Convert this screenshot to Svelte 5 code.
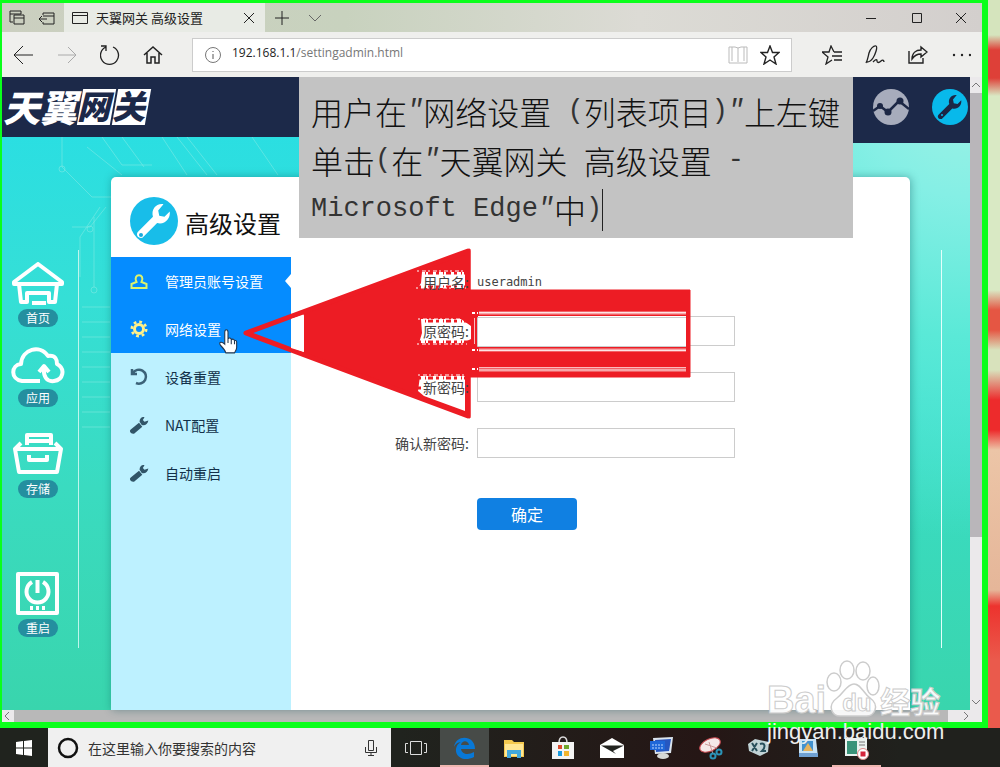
<script>
  const menu = [
    { label: '管理员账号设置', icon: 'user', on: true, notch: true },
    { label: '网络设置', icon: 'gear', on: true },
    { label: '设备重置', icon: 'reset' },
    { label: 'NAT配置', icon: 'tool' },
    { label: '自动重启', icon: 'tool' }
  ];
  const fields = [
    { id: 'old', label: '原密码:' },
    { id: 'new', label: '新密码:' },
    { id: 'confirm', label: '确认新密码:' }
  ];
  const apps = ['explorer', 'store', 'mail', 'monitor', 'snip', 'input', 'picture', 'recorder'];
</script>

{#snippet wrench()}
  <path d="M-15 10 -1 -4C-3 -11 2 -17 9 -16L4 -10 5 -5 10 -4 15 -9C16 -2 10 4 3 2L-11 16C-15 17 -18 13 -15 10Z" />
{/snippet}

<div class="desktop">
  <div class="upper">
    <div class="window">
      <div class="tabs">
        <button class="set" aria-label="标签页"><svg width="16" height="16" viewBox="0 0 16 16"><path d="M4 12H1V1h11v3M1 4h11M5 5h10v9H5zM5 8h10" /></svg></button>
        <button class="set" aria-label="搁置"><svg width="16" height="16" viewBox="0 0 16 16"><path d="M4 5V3h11v11H4v-2M4 6h11M0 9h8M3 6 0 9l3 3" /></svg></button>
        <div class="tab">
          <svg width="16" height="16" viewBox="0 0 16 16"><path d="M.5 2.500h15v11H.5zM.5 5.500h15" /></svg>
          <span>天翼网关 高级设置</span>
          <button aria-label="关闭标签页"><svg width="12" height="12" viewBox="0 0 12 12"><path d="m1 1 10 10M11 1 1 11" /></svg></button>
        </div>
        <button class="new" aria-label="新建"><svg width="14" height="14" viewBox="0 0 14 14"><path d="M7 0v14M0 7h14" /></svg></button>
        <button class="new" aria-label="更多标签"><svg width="14" height="14" viewBox="0 0 14 14"><path d="m1 4 6 6 6-6" stroke="#666" /></svg></button>
        <span class="fill"></span>
        <button class="win" aria-label="最小化"><svg width="12" height="12" viewBox="0 0 12 12"><path d="M1 6.500h10" /></svg></button>
        <button class="win" aria-label="最大化"><svg width="12" height="12" viewBox="0 0 12 12"><path d="M1.500 1.500h9v9h-9z" /></svg></button>
        <button class="win last" aria-label="关闭"><svg width="12" height="12" viewBox="0 0 12 12"><path d="m1 1 10 10M11 1 1 11" /></svg></button>
      </div>

      <div class="toolbar">
        <button aria-label="后退"><svg width="20" height="20" viewBox="0 0 20 20"><path d="M0 10h19M9 1 0 10l9 9" /></svg></button>
        <button aria-label="前进"><svg width="20" height="20" viewBox="0 0 20 20"><path d="M1 10h18M11 2l8 8-8 8" stroke="#aaa" /></svg></button>
        <button aria-label="刷新"><svg width="20" height="20" viewBox="0 0 20 20"><path d="M13 2a9 9 0 1 1-7 0M1 1h5v5" stroke-width="1.300" /></svg></button>
        <button aria-label="主页"><svg width="20" height="20" viewBox="0 0 20 20"><path d="M1 10 10 2l9 8M4 8v10h4v-6h4v6h4V8" stroke-width="1.500" /></svg></button>
        <div class="address">
          <svg width="16" height="16" viewBox="0 0 16 16"><circle cx="8" cy="8" r="7.500" stroke="#777" /><path d="M8 7v5M8 4v1" stroke="#555" /></svg>
          <span class="url">192.168.1.1<i>/settingadmin.html</i></span>
          <button aria-label="阅读视图"><svg width="20" height="20" viewBox="0 0 20 20"><path d="M10 3v14M1 2h6l3 1 3-1h6v16H1zM4 2v14M16 2v14" stroke="#bbb" /></svg></button>
          <button aria-label="收藏"><svg width="20" height="20" viewBox="0 0 20 20"><path d="m10 1 2.500 6.500H19l-5 4.500 2 7-6-4-6 4 2-7-5-4.500h6.500z" stroke-width="1.400" /></svg></button>
        </div>
        <div class="tools">
          <button aria-label="收藏夹"><svg width="20" height="20" viewBox="0 0 20 20"><path d="M12 7 9 1 7 7H0l6 5-2 7 6-4M12 7h8M10 11h10M12 15h8" stroke-width="1.300" /></svg></button>
          <button aria-label="笔记"><svg width="20" height="20" viewBox="0 0 20 20"><path d="M1 18c2-4 2-6 3-10s5-8 7-7-1 9-3 12-4 4-6 4M8 17c3-3 4-3 4-1s2 2 4 0 3 0 3 1" stroke-width="1.300" /></svg></button>
          <button aria-label="共享"><svg width="20" height="20" viewBox="0 0 20 20"><path d="M1 6v12h14v-5M13 2l6 5-6 5V9c-5 0-7 2-9 5 0-6 4-9 9-9z" stroke-width="1.400" /></svg></button>
          <button aria-label="设置及更多"><svg width="20" height="20" viewBox="0 0 20 20"><g fill="#222" stroke="none"><circle cx="3" cy="10" r="1.200" /><circle cx="11" cy="10" r="1.200" /><circle cx="19" cy="10" r="1.200" /></g></svg></button>
        </div>
      </div>

      <div class="view">
        <main class="page">
          <svg class="circuit" viewBox="0 0 968 633" preserveAspectRatio="xMinYMin slice">
            <path d="M60 60v30l30 30h20M100 60l20 28h30M120 60l22 30M160 60l25 38M185 60l30 38M175 60l30 38M250 60l26 38M85 70l35 28M70 150h18l16-20M78 200v-40l20-30M92 210v-70M80 230h28M80 245h28M80 260h28M80 275h28M80 290h28M80 305h28M80 320h28M80 335h28M80 350h28" />
            <circle cx="88" cy="152" r="3" /><circle cx="92" cy="213" r="3" /><circle cx="60" cy="92" r="3" />
          </svg>
          <header>
            <div class="brand">天翼<span class="box">网</span><span class="box">关</span></div>
            <div class="badges">
              <svg width="36" height="36" viewBox="-18 -18 36 36"><circle r="18" fill="#a7acbc" /><g fill="#1c2745"><path d="M-18 4-11-1-3 5 8-6 18 2" fill="none" stroke="#1c2745" stroke-width="2.500" /><circle cx="-11" cy="-1" r="3" /><circle cx="-3" cy="5" r="3.500" /><circle cx="9" cy="-6" r="3.500" /></g></svg>
              <svg width="36" height="36" viewBox="-18 -18 36 36"><circle r="18" fill="#08b9eb" /><g fill="#1c2745" transform="scale(.75)">{@render wrench()}</g><circle cx="-8" cy="8" r="1" fill="#08b9eb" /></svg>
            </div>
          </header>

          <div class="content">
            <nav class="rail">
              <a href="#home"><svg width="52" height="44" viewBox="0 0 52 44"><path d="M2 20 26 2l24 18v2H2zM7 22l2 18h6V31h22v9h6l2-18M20 41h14" /></svg><span>首页</span></a>
              <a href="#apps"><svg width="54" height="39" viewBox="0 0 54 39"><path d="M29 34H11C-1 32 0 18 10 17 11 2 29-3 37 9c8-1 9 4 9 8 9 5 6 16-3 17-7 1-11-4-10-14M28 25l5-6 5 6" /></svg><span>应用</span></a>
              <a href="#storage"><svg width="50" height="50" viewBox="0 0 50 50"><path d="M14 18V8h24v10M12 14h28M8 16l-6 6 4 23h38l4-23-6-6M3 22h44M16 28v5h18v-5" /></svg><span>存储</span></a>
              <a href="#restart" class="end"><svg width="44" height="44" viewBox="0 0 44 44"><path d="M2 2h39v39H2zM16 10a11 11 0 1 0 11 0M21.500 8v13" /><path d="M14 36h3m3 0h3m3 0h3" /></svg><span>重启</span></a>
            </nav>

            <section class="card">
              <div class="title">
                <svg width="50" height="50" viewBox="-25 -25 50 50"><circle r="24" fill="#18bde9" /><g fill="#fff" transform="scale(1.050)">{@render wrench()}</g><circle cx="-13" cy="14" r="2" fill="#18a9dc" /></svg>
                <h1>高级设置</h1>
              </div>
              <div class="panel">
                <ul class="menu">
                  {#each menu as item}
                    <li class:on={item.on} class:notch={item.notch}>
                      <a href="#menu">
                        <svg width="20" height="20" viewBox="-10 -10 20 20">
                          {#if item.icon === 'user'}
                            <path d="M-2.500 1C-7-8 7-8 2.500 1L7.500 3V7H-7.500V3Z" fill="none" stroke="#dcf36c" stroke-width="2" />
                          {:else if item.icon === 'gear'}
                            <circle r="4.500" fill="none" stroke="#fff18a" stroke-width="3" />
                            <circle r="7.200" fill="none" stroke="#fff18a" stroke-width="2.600" stroke-dasharray="2.800 2.855" />
                          {:else if item.icon === 'reset'}
                            <path d="M-6-4A7 7 0 1 1-3 6M-7-8v5h5" fill="none" stroke="#3c6278" stroke-width="2.500" />
                          {:else}
                            <g fill="#315568" transform="scale(.55)"><path d="M-15 8 0-4 6 3-9 16C-14 17-19 12-15 8ZM1-6C1-12 6-16 10-14L7-9 10-6 17-8C16-1 10 2 5 0Z" /></g>
                          {/if}
                        </svg>
                        {item.label}
                      </a>
                    </li>
                  {/each}
                </ul>
                <form>
                  <div class="row user"><span class="label">用户名:</span><span class="value">useradmin</span></div>
                  {#each fields as f}
                    <div class="row"><label class="label" for={f.id}>{f.label}</label><input id={f.id} type="password" /></div>
                  {/each}
                  <button type="button" class="ok">确定</button>
                </form>
              </div>

              <svg class="arrow" width="456" height="176" viewBox="240 245 456 176">
                <path d="M304 311 470 249V290H690V377H470V418L304 355Z" fill="#ed1c24" stroke="#ed1c24" stroke-linejoin="round" />
                <path d="M246 333 468 251V416Z" fill="none" stroke="#ed1c24" stroke-width="5" stroke-linejoin="round" />
                <path d="M291 319 304 315V352L291 348Z" fill="#fff" />
                <path d="M422 272h43v16h-47l3-5zM421 319h40l10 7v13l-8 4h-44l3-10zM420 376h45v35l-41-15-6-5z" fill="#fff" />
                <path d="M418 273h48M418 287h48M418 321h54M418 342h54M418 378h47M418 388h6M416 281h6M416 331h6" stroke="#ed1c24" stroke-width="3" stroke-dasharray="3 4 1 2 5 3" fill="none" />
                <path d="M417 271h49M416 288h50M418 319h44M417 344h50M418 375h48" stroke="#fff" stroke-dasharray="2 3 4 2" fill="none" />
                <path d="M478 316H686V347H478z" fill="#fff" />
                <path d="M686 317.500H477.500V346.500H686" fill="none" stroke="#ccc" />
                <path d="M479 313H686M479 350H686M479 370H686" stroke="#f8a5a8" stroke-width="3" />
                <path d="M479 312.500H686M479 350.500H686M479 367.500H686M474.500 318v26" stroke="#fff" stroke-opacity=".7" />
                <path d="M472 313h7M472 350h7M472 369h7" stroke="#fff" stroke-width="2" stroke-dasharray="3 2 1" />
              </svg>
            </section>
            <div class="edge"></div>
          </div>
        </main>
        <div class="vbar">
          <svg width="12" height="16" viewBox="0 0 12 16"><path d="m2 10 4-4 4 4" /></svg><b></b>
          <svg width="12" height="16" viewBox="0 0 12 16"><path d="m2 6 4 4 4-4" /></svg>
        </div>
        <div class="hbar">
          <svg width="12" height="12" viewBox="0 0 12 12"><path d="M7 2 3 6l4 4" /></svg><b></b>
          <svg width="24" height="12" viewBox="0 0 24 12"><path d="m6 2 4 4-4 4" /></svg>
        </div>
      </div>

      <div class="note">
        <div>用户在<em>"</em>网络设置<tt>&nbsp;(</tt>列表项目<tt>)</tt><em>"</em>上左键</div>
        <div>单击<tt>(</tt>在<em>"</em>天翼网关<tt>&nbsp;</tt>高级设置<tt>&nbsp;-</tt></div>
        <div><tt>Microsoft Edge</tt><em>"</em>中<tt>)</tt><span class="caret"></span></div>
      </div>
      <svg class="hand" width="20" height="26" viewBox="0 0 18 24"><path d="M6 14V3c0-3 3-3 3 0v6c1-1 3-1 3 1 1-1 3-1 3 1 1-1 2 0 2 1v5c0 2-1 3-2 5H7c-1-3-3-5-5-7-2-3 1-4 4-1zM9 9v4M12 10v4M15 11v3" fill="#fff" stroke="#24364d" /></svg>
    </div>
    <div class="wallpaper"></div>
  </div>

  <footer>
    <button class="start" aria-label="开始"><svg width="18" height="18" viewBox="0 0 18 18"><path d="M1 3l7-1v6.500H1zM9 2l8-1v7.500H9zM1 9.500h7V16l-7-1zM9 9.500h8V17l-8-1z" fill="#fff" /></svg></button>
    <div class="search">
      <svg width="22" height="22" viewBox="0 0 22 22"><circle cx="11" cy="11" r="9" fill="none" stroke="#111" stroke-width="2.500" /></svg>
      <input aria-label="搜索" placeholder="在这里输入你要搜索的内容" />
      <svg width="14" height="18" viewBox="0 0 14 18"><path d="M4.500 1.500h5v10h-5zM1.500 8v5.500h11V8M7 14v3M4 16.500h6" fill="none" stroke="#333" /></svg>
    </div>
    <button class="app" aria-label="任务视图"><svg width="24" height="18" viewBox="0 0 24 18"><path d="M6.500 2.500h11v13h-11zM4 4.500H1.500v9H4M20 4.500h2.500v9H20" fill="none" stroke="#ddd" /></svg></button>
    <button class="app current" aria-label="Edge"><svg width="24" height="24" viewBox="0 0 24 24"><path d="M1 11C3-2 22-1 22 13H8c1 6 8 6 13 3v5C11 26 2 21 3 13 4 8 7 6 9 6 4 6 2 9 1 11ZM8 9h8C15 4 9 4 8 9Z" fill="#0878d7" fill-rule="evenodd" /></svg></button>
    {#each apps as app}
      <button class="app" class:live={app === 'recorder'} aria-label={app}>
        <svg width="26" height="24" viewBox="0 0 26 24">
          {#if app === 'explorer'}
            <path d="M3 4h8l2 2h10v15H3z" fill="#f4c94f" /><path d="M4 8h18v12H4z" fill="#ffe794" /><path d="M6 14h14v8h-4v-4h-6v4H6z" fill="#43a8dc" />
          {:else if app === 'store'}
            <path d="M9 7C9-1 17-1 17 7" fill="none" stroke="#ddd" stroke-width="1.500" /><path d="M2 6h22v17H2z" fill="#f4f4f4" /><path d="M8 9h4v4H8z" fill="#dd4c2f" /><path d="M14 9h5v4h-5z" fill="#71a82d" /><path d="M8 15h4v5H8z" fill="#1b9de1" /><path d="M14 15h5v5h-5z" fill="#f2b52e" />
          {:else if app === 'mail'}
            <path d="M1 9 13 2l12 7v13H1z" fill="#fff" /><path d="M2 9.500h23L14 15l3 3z" fill="#22231f" />
          {:else if app === 'monitor'}
            <path d="M5 2 25 1 23 17 7 18z" fill="#dbe4ee" /><path d="M7 4 23 3 21 15 8 16z" fill="#2657c0" /><path d="M2 5h15v9H2z" fill="#1e67d8" /><path d="M4 9h11M4 12h11" stroke="#b9d8ff" stroke-dasharray="2 1" /><ellipse cx="15" cy="20" rx="6" ry="3" fill="#d6d8d5" />
          {:else if app === 'snip'}
            <ellipse cx="13" cy="9" rx="11" ry="6" transform="rotate(-25 13 9)" fill="#f5e8e8" stroke="#c6474e" /><path d="m8 8 12 4M12 6l4 12" stroke="#c99" /><g fill="none" stroke="#2b93b7" stroke-width="2"><circle cx="16" cy="20" r="2.500" /><circle cx="22" cy="16" r="2.500" /></g>
          {:else if app === 'input'}
            <path d="M2 8 9 3l14 3-1 10-8 4L3 15z" fill="#c1d3d6" /><path d="m6 7 5 8M11 7l-5 8M14 8c5-2 6 3 2 7h4" stroke="#28505c" stroke-width="2" fill="none" />
          {:else if app === 'picture'}
            <path d="M4 3h17l2 18H4z" fill="#c9e4f6" /><path d="M7 5h11v10H7z" fill="#4293d0" /><path d="m8 15 5-8 5 8z" fill="#e6b35d" /><path d="M4 17h19v4H4z" fill="#6fa0d2" />
          {:else}
            <path d="M1 2h22v18H1z" fill="#eaf2ef" /><path d="M3 5h10v13H3z" fill="#399379" /><path d="M15 6h6M15 9h6" stroke="#777" /><circle cx="19" cy="18" r="5.500" fill="#fff" stroke="#d88" /><path d="M16.500 15.500h5v5h-5z" fill="#d5233b" />
          {/if}
        </svg>
      </button>
    {/each}
  </footer>

  <div class="mark">
    <div class="name"><strong>Bai</strong>
      <span class="paw">
        <svg width="54" height="60" viewBox="0 0 54 60"><g fill="#fff" fill-opacity=".9" stroke="#ccc" stroke-width="1.500"><ellipse cx="21" cy="11" rx="7" ry="9" /><ellipse cx="37" cy="12" rx="7" ry="9" /><ellipse cx="8" cy="23" rx="7" ry="9" /><ellipse cx="47" cy="27" rx="6" ry="9" /><path d="M28 25c7 0 9 9 16 14 10 7 5 19-5 18H16C5 58 1 46 11 39c7-5 10-14 17-14z" /></g></svg>
        <strong>du</strong>
      </span>
      <strong class="cn">经验</strong>
    </div>
    <div class="site">jingyan.baidu.com</div>
  </div>
</div>

<style>
  :global(body) { margin: 0; }
  * { box-sizing: border-box; }
  .desktop { position: relative; min-height: 100vh; display: flex; flex-direction: column; overflow: hidden; font-family: "Noto Sans CJK SC", sans-serif; background: #20211d; }
  button { border: 0; padding: 0; background: none; font: inherit; display: flex; align-items: center; justify-content: center; flex: none; }
  svg { flex: none; display: block; }
  a { color: inherit; text-decoration: none; }
  .upper { flex: 1; display: flex; }
  .window { position: relative; flex: 1; min-width: 0; display: flex; flex-direction: column; border: solid #0aff1b; border-width: 3px 6px 6px 2px; }
  .wallpaper { width: 12px; background: linear-gradient(#d5e4bd 0 35px, #de4038 50px 78px, #d9e9c4 96px 290px, #e55643 310px 330px, #d8e2bc 350px 370px, #ed2b2c 400px 430px, #ecc5a7 450px, #e5b699 590px, #ed332e 606px, #ea5a4c 660px); }

  .tabs { display: flex; height: 29px; background: linear-gradient(90deg, #cbcfc0, #c8d2be 35%, #dcdbd5 65%, #d3cfcd); }
  .tabs svg, .toolbar svg { fill: none; stroke: #222; }
  .set { width: 30px; }
  .tab { width: 201px; display: flex; align-items: center; background: #e8ebe5; padding: 0 8px; font-size: 13px; line-height: 20px; color: #222; margin-left: 2px; }
  .tab span { flex: 1; margin-left: 8px; white-space: nowrap; }
  .tab button { width: 16px; }
  .new { width: 33px; }
  .fill { flex: 1; }
  .win { width: 46px; }
  .win.last { width: 42px; }
  .toolbar { display: flex; height: 45px; align-items: center; background: #efefed; }
  .toolbar > button { width: 43px; }
  .address { flex: 1; height: 34px; margin: 0 18px; display: flex; align-items: center; background: #fff; border: 1px solid #ccc; padding: 0 10px 0 12px; }
  .address button { width: 32px; }
  .address button:last-child { width: 22px; margin-left: 5px; }
  .url { flex: 1; margin-left: 11px; font: 12px/16px "Open Sans", sans-serif; color: #222; padding-bottom: 4px; }
  .url i { font-style: normal; color: #777; }
  .tools { display: flex; }
  .tools button { width: 43px; }

  .view { flex: 1; display: grid; grid-template-columns: minmax(0, 1fr) 12px; grid-template-rows: 1fr 12px; }
  .page { position: relative; display: flex; flex-direction: column; background: radial-gradient(circle at 100% 0, #a2f2e5 0, #85efe5 120px, #5ae9d7 260px, transparent 460px), linear-gradient(#27dee6, #35dfd6 35%, #3adbc0 65%, #39d5ad); }
  .circuit { position: absolute; inset: 0; width: 100%; height: 100%; fill: none; stroke: #8cebe6; stroke-opacity: .5; }
  header { position: relative; display: flex; align-items: flex-start; height: 100px; }
  .brand { flex: 1; height: 60px; background: #1c2949; color: #fff; padding-left: 1px; font-size: 37px; line-height: 58px; font-weight: 900; font-style: italic; display: flex; }
  .brand .box { position: relative; z-index: 0; color: #1c2949; width: 35px; font-size: 33px; line-height: 56px; }
  .brand .box::before { content: ""; position: absolute; z-index: -1; inset: 12px -1px 12px 3px; background: #fff; transform: skewX(-10deg); }
  .badges { width: 117px; height: 66px; padding: 12px 2px 0 20px; display: flex; gap: 23px; background: #1c2949; }
  .content { position: relative; flex: 1; display: grid; grid-template-columns: 77px 32px minmax(0, 1fr) 60px; }
  .rail { height: 398px; margin-top: 73px; padding: 12px 4px 11px 0; border-right: 1px solid #bff5ec; display: flex; flex-direction: column; gap: 20px; align-items: center; }
  .rail a { display: flex; flex-direction: column; gap: 3px; align-items: center; }
  .rail a.end { margin-top: auto; }
  .rail svg { fill: none; stroke: #fff; stroke-width: 4; stroke-linejoin: round; }
  .rail span { width: 40px; height: 18px; border-radius: 9px; background: #248f9f; color: #fff; font-size: 12px; line-height: 18px; text-align: center; }
  .card { position: relative; grid-column: 3; display: flex; flex-direction: column; background: #fff; border-radius: 5px 5px 0 0; box-shadow: 1px 0 8px #0a4c5266; }
  .title { height: 80px; display: flex; align-items: center; gap: 6px; padding: 8px 0 0 18px; }
  h1 { margin: 0; font-size: 24px; line-height: 36px; font-weight: 400; color: #111; padding-top: 4px; }
  .panel { flex: 1; display: flex; }
  .menu { width: 180px; margin: 0; padding: 0; list-style: none; background: #bdf1ff; font-size: 14px; line-height: 20px; color: #12314a; }
  .menu li { position: relative; height: 48px; }
  .menu a { height: 48px; padding-left: 18px; display: flex; align-items: center; gap: 16px; }
  .menu .on { background: #058cff; color: #fff; }
  .notch::after { content: ""; position: absolute; right: 0; top: 17px; border: solid transparent; border-width: 7px 6px 7px 0; border-right-color: #fff; }
  form { flex: 1; padding-top: 4px; font-size: 14px; line-height: 20px; color: #444; }
  .row { display: flex; height: 56px; align-items: center; gap: 8px; }
  .row.user { height: 42px; }
  .label { position: relative; z-index: 2; width: 178px; text-align: right; }
  .value { font: 12px/18px "DejaVu Sans Mono", monospace; }
  .row input { width: 258px; height: 30px; border: 1px solid #ccc; background: #fff; padding: 0 8px; }
  .ok { width: 100px; height: 32px; margin: 27px 0 0 186px; border-radius: 4px; background: #1080e2; color: #fff; font-size: 16px; line-height: 24px; }
  .arrow { position: absolute; left: 129px; top: 68px; z-index: 1; }
  .edge { width: 32px; height: 398px; margin-top: 73px; border-right: 1px solid #e3fffb; }

  .vbar { display: flex; flex-direction: column; background: #ebe9eb; }
  .vbar svg, .hbar svg { fill: none; stroke: #777; }
  .vbar b { height: 444px; margin-bottom: auto; background: #b9b6ba; }
  .hbar { grid-column: 1 / 3; display: flex; background: #ebe9eb; }
  .hbar b { flex: 1; background: #b8b8b8; margin-right: 10px; }

  .note { position: absolute; left: 297px; top: 74px; width: 554px; height: 161px; background: #c3c3c3; padding: 10px 12px; font-size: 32px; line-height: 49px; font-weight: 300; color: #111; white-space: nowrap; }
  .note div { display: flex; height: 49px; }
  .note tt, .note em { font-family: "Liberation Mono", monospace; font-size: 27px; color: #333; }
  .caret { width: 1px; height: 42px; margin-top: 4px; background: #222; }
  .hand { position: absolute; left: 216px; top: 326px; }

  footer { height: 39px; display: flex; background: linear-gradient(90deg, #20231e 40%, #251615 70%, #20211d 90%); }
  .start { width: 48px; }
  .search { width: 343px; display: flex; align-items: center; background: #f0f0f0; padding: 0 13px 0 9px; }
  .search input { flex: 1; min-width: 0; margin-left: 9px; padding: 0; border: 0; background: none; font: 14px/20px "Noto Sans CJK SC", sans-serif; }
  .search input::placeholder { color: #333; opacity: 1; }
  .app { width: 49px; }
  .app.current { background: #474b48; }
  .current, .live { box-shadow: inset 0 -2px #efb6b0; }

  .mark { position: absolute; right: 53px; bottom: 22px; width: 180px; color: #fff; }
  .name { display: flex; align-items: flex-end; height: 60px; }
  .mark strong { font: bold 38px/38px "Liberation Sans", sans-serif; color: #fffffff0; -webkit-text-stroke: 1px #ccc; }
  .paw { position: relative; width: 54px; height: 60px; }
  .mark .paw strong { position: absolute; left: 16px; bottom: 2px; font-size: 24px; line-height: 28px; }
  .mark .cn { font: bold 30px/38px "Noto Sans CJK SC", sans-serif; }
  .site { font: 22px/26px "Liberation Sans", sans-serif; color: #eee; }
</style>
